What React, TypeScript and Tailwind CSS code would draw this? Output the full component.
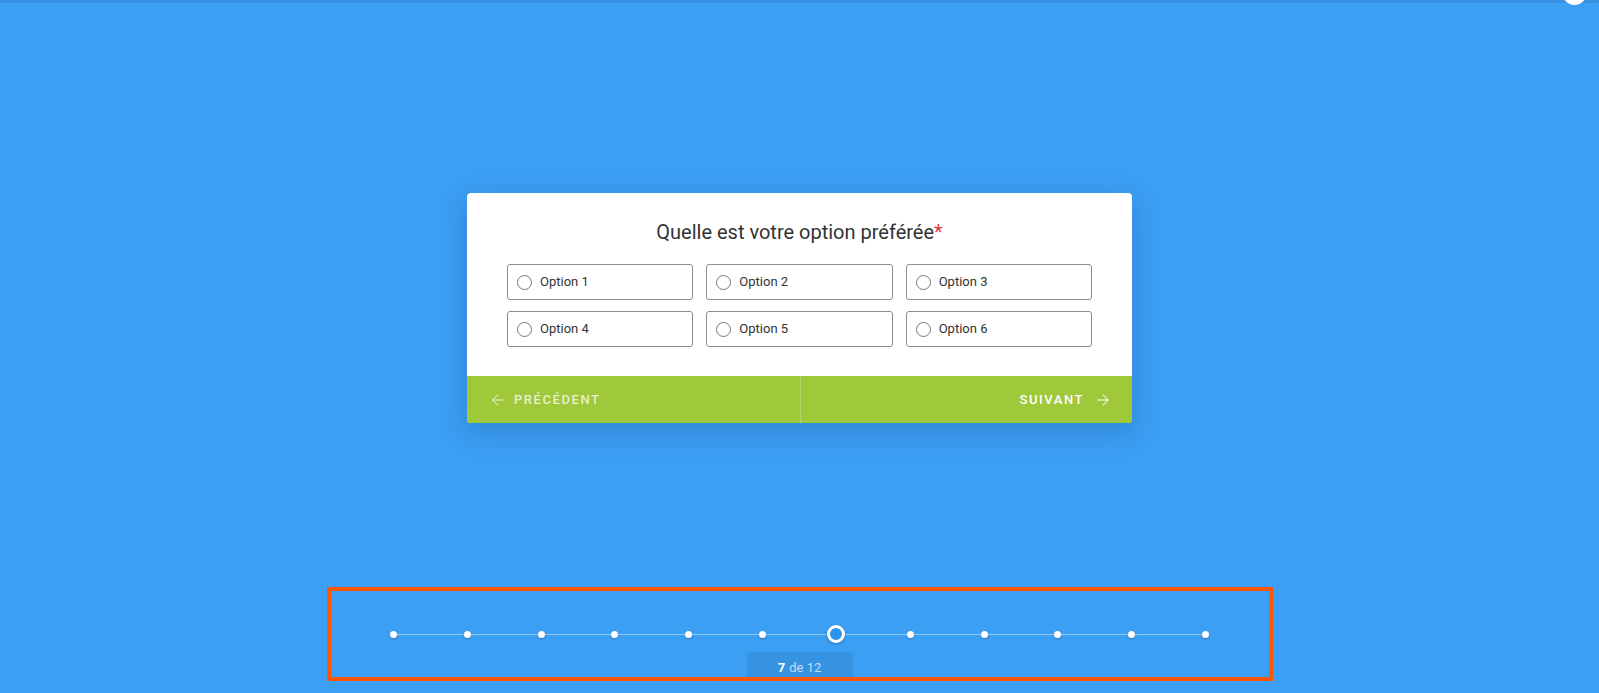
import { ArrowLeft, ArrowRight } from "lucide-react";

const OPTIONS = ["Option 1", "Option 2", "Option 3", "Option 4", "Option 5", "Option 6"];
const TOTAL = 12;
const CURRENT = 7;

function OptionBox({ label }: { label: string }) {
  return (
    <label className="flex h-[36px] cursor-pointer items-center gap-[8px] rounded-[3px] border border-[#8c8c8c] pl-[9px] text-[13px] text-[#333]">
      <span className="h-[15px] w-[15px] rounded-full border border-[#777]" />
      <span>{label}</span>
    </label>
  );
}

function Progress() {
  return (
    <div className="mx-auto mt-[164px] h-[94px] w-[946px] overflow-hidden border-4 border-[#ff5500]">
      <div className="pt-[34px]">
        <div className="relative px-[54px]">
          {/* ligne derrière les points */}
          <div className="absolute left-[63px] right-[63px] top-[9px] h-px bg-white/45" />
          <div className="relative flex justify-between">
            {Array.from({ length: TOTAL }, (_, i) => (
              <div key={i} className="flex h-[18px] w-[18px] items-center justify-center">
                {i + 1 === CURRENT ? (
                  <span className="h-[18px] w-[18px] rounded-full border-[3px] border-white bg-[#2a93ee] shadow-[0_1px_3px_rgba(0,0,0,0.25)]" />
                ) : (
                  <span className="h-[7px] w-[7px] rounded-full bg-white shadow-[0_1px_2px_rgba(0,0,0,0.25)]" />
                )}
              </div>
            ))}
          </div>
        </div>
        <div className="mx-auto mt-[9px] flex h-[32px] w-[106px] items-center justify-center rounded-t-[3px] bg-black/[0.07] text-[13px] text-white/70">
          <span className="mr-[4px] font-bold text-white">{CURRENT}</span> de {TOTAL}
        </div>
      </div>
    </div>
  );
}

export default function App() {
  return (
    <div
      className="relative h-[693px] w-full overflow-hidden bg-[#3b9ff3]"
      style={{ fontFamily: "Roboto, 'Liberation Sans', sans-serif" }}
    >
      <div className="h-[3px] bg-[#3592e2]" />
      <div className="absolute right-[12px] top-[-20px] h-[25px] w-[25px] rounded-full bg-[radial-gradient(circle_at_50%_70%,#fff_35%,#f3d9a8_70%,#c9c9c9)]" />

      <div className="flex justify-center pt-[190px]">
        <div className="w-[665px] overflow-hidden rounded-[4px] bg-white shadow-[0_8px_28px_rgba(20,60,120,0.28)]">
          <div className="px-10 pb-[29px] pt-[25px]">
            <h2 className="text-center text-[20px] leading-[28px] text-[#333]">
              Quelle est votre option préférée<span className="text-[#e53935]">*</span>
            </h2>
            <div className="mt-[18px] grid grid-cols-3 gap-x-[13px] gap-y-[11px]">
              {OPTIONS.map((o) => (
                <OptionBox key={o} label={o} />
              ))}
            </div>
          </div>
          <div className="flex h-[47px] bg-[#9fc83b] text-[13px] font-medium tracking-[0.12em]">
            <button className="flex flex-1 items-center gap-[7px] border-r border-white/20 pl-[22px] text-white/75">
              <ArrowLeft size={18} strokeWidth={1.4} />
              PRÉCÉDENT
            </button>
            <button className="flex flex-1 items-center justify-end gap-[10px] pr-[20px] text-white">
              SUIVANT
              <ArrowRight size={18} strokeWidth={1.4} />
            </button>
          </div>
        </div>
      </div>

      <Progress />
    </div>
  );
}
